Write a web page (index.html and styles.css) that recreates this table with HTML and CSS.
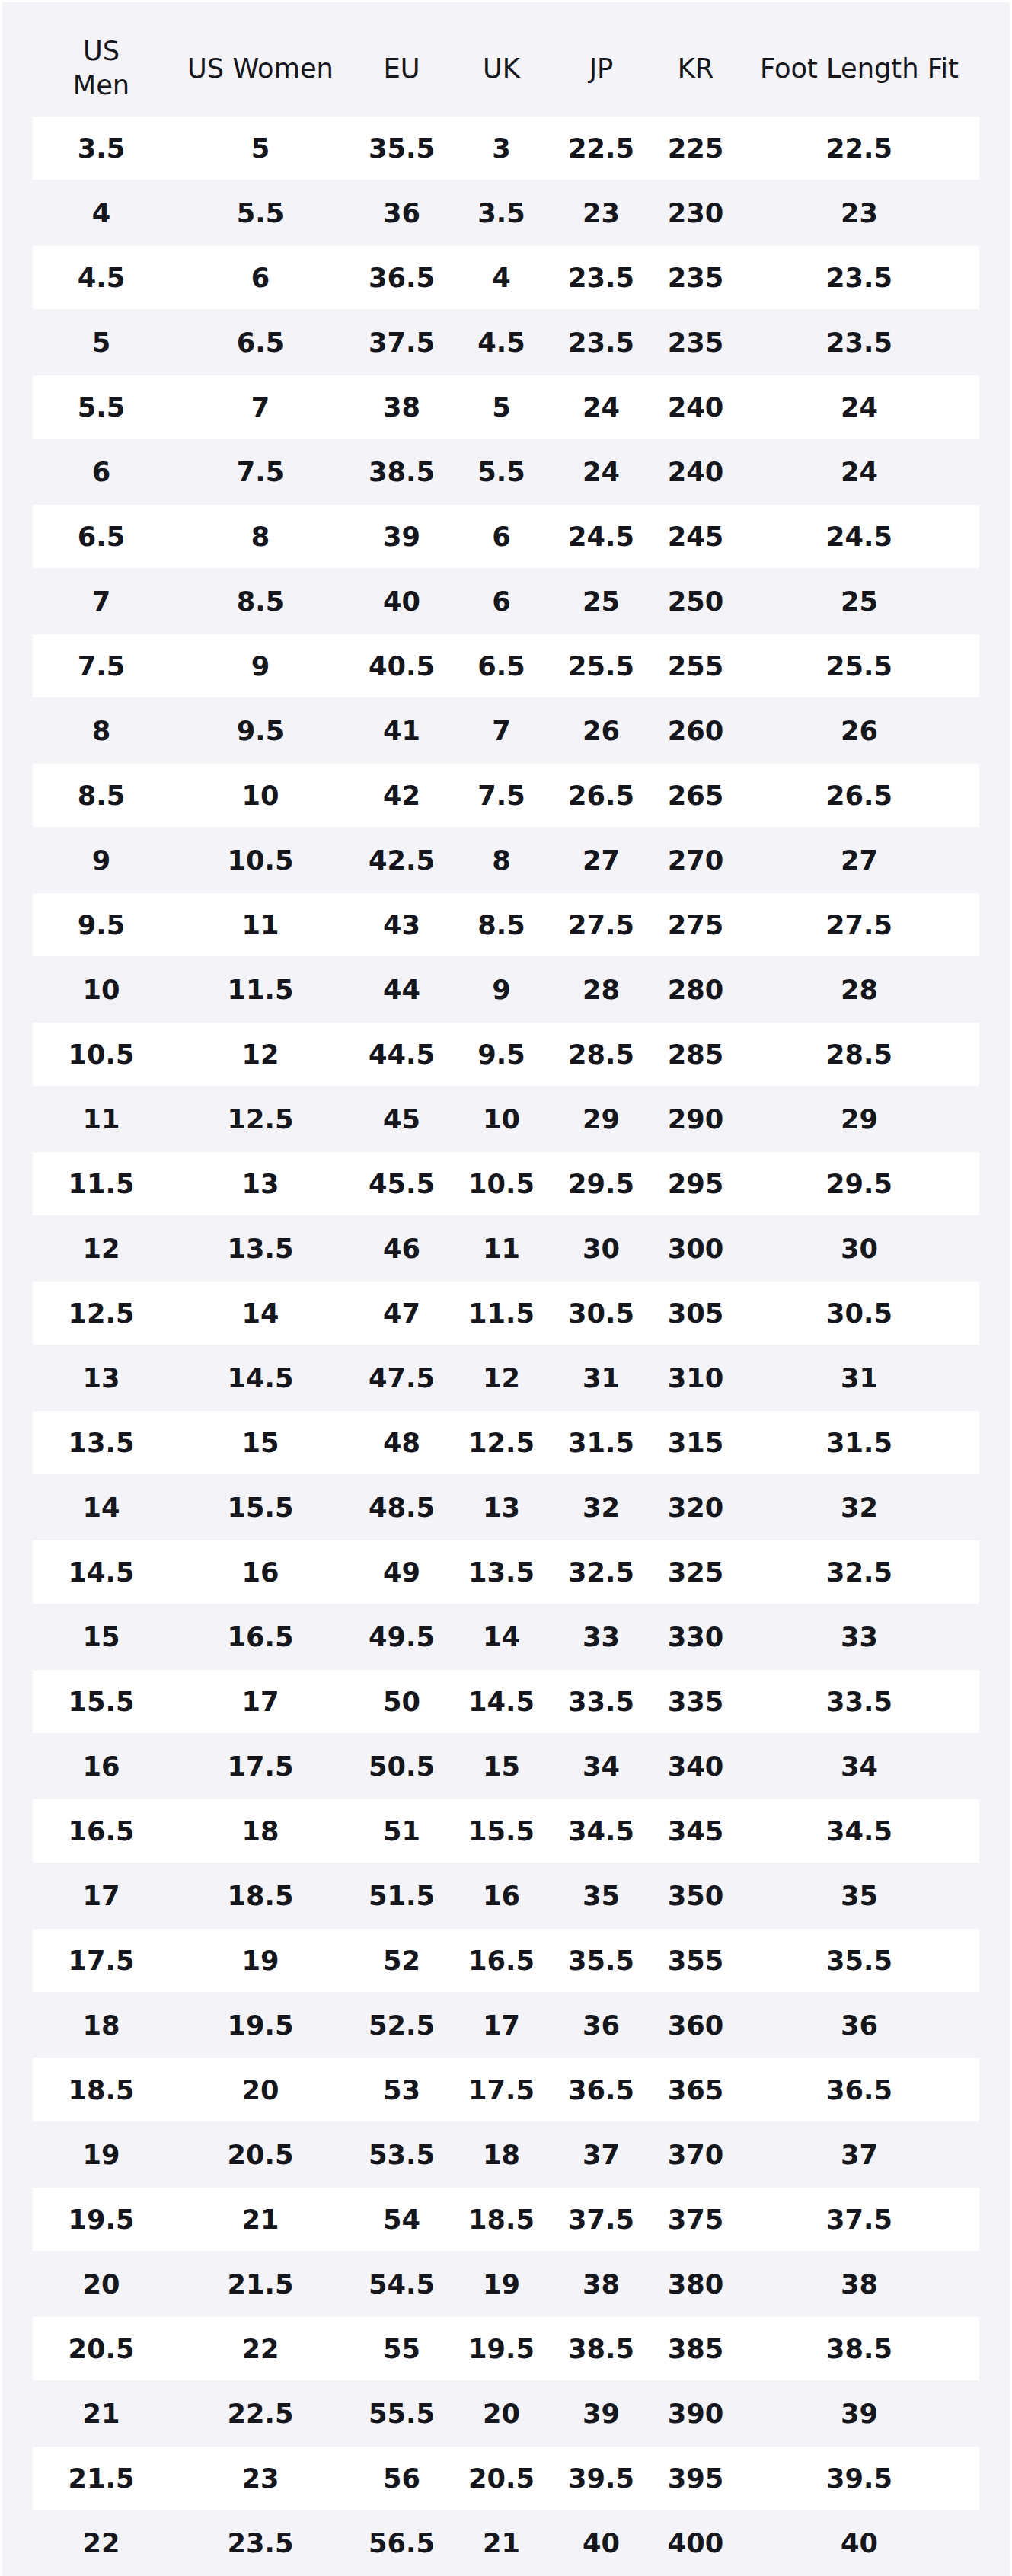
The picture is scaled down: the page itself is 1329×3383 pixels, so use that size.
FILE: index.html
```html
<!DOCTYPE html>
<html lang="en">
<head>
<meta charset="utf-8">
<title>Size Chart</title>
<link rel="stylesheet" href="styles.css">
</head>
<body>
<div class="chart">
<table class="size-table">
<colgroup>
<col class="c-men"><col class="c-women"><col class="c-eu"><col class="c-uk"><col class="c-jp"><col class="c-kr"><col class="c-foot">
</colgroup>
<thead>
<tr><th>US<br>Men</th><th>US Women</th><th>EU</th><th>UK</th><th>JP</th><th>KR</th><th>Foot Length Fit</th></tr>
</thead>
<tbody>
<tr><td>3.5</td><td>5</td><td>35.5</td><td>3</td><td>22.5</td><td>225</td><td>22.5</td></tr>
<tr><td>4</td><td>5.5</td><td>36</td><td>3.5</td><td>23</td><td>230</td><td>23</td></tr>
<tr><td>4.5</td><td>6</td><td>36.5</td><td>4</td><td>23.5</td><td>235</td><td>23.5</td></tr>
<tr><td>5</td><td>6.5</td><td>37.5</td><td>4.5</td><td>23.5</td><td>235</td><td>23.5</td></tr>
<tr><td>5.5</td><td>7</td><td>38</td><td>5</td><td>24</td><td>240</td><td>24</td></tr>
<tr><td>6</td><td>7.5</td><td>38.5</td><td>5.5</td><td>24</td><td>240</td><td>24</td></tr>
<tr><td>6.5</td><td>8</td><td>39</td><td>6</td><td>24.5</td><td>245</td><td>24.5</td></tr>
<tr><td>7</td><td>8.5</td><td>40</td><td>6</td><td>25</td><td>250</td><td>25</td></tr>
<tr><td>7.5</td><td>9</td><td>40.5</td><td>6.5</td><td>25.5</td><td>255</td><td>25.5</td></tr>
<tr><td>8</td><td>9.5</td><td>41</td><td>7</td><td>26</td><td>260</td><td>26</td></tr>
<tr><td>8.5</td><td>10</td><td>42</td><td>7.5</td><td>26.5</td><td>265</td><td>26.5</td></tr>
<tr><td>9</td><td>10.5</td><td>42.5</td><td>8</td><td>27</td><td>270</td><td>27</td></tr>
<tr><td>9.5</td><td>11</td><td>43</td><td>8.5</td><td>27.5</td><td>275</td><td>27.5</td></tr>
<tr><td>10</td><td>11.5</td><td>44</td><td>9</td><td>28</td><td>280</td><td>28</td></tr>
<tr><td>10.5</td><td>12</td><td>44.5</td><td>9.5</td><td>28.5</td><td>285</td><td>28.5</td></tr>
<tr><td>11</td><td>12.5</td><td>45</td><td>10</td><td>29</td><td>290</td><td>29</td></tr>
<tr><td>11.5</td><td>13</td><td>45.5</td><td>10.5</td><td>29.5</td><td>295</td><td>29.5</td></tr>
<tr><td>12</td><td>13.5</td><td>46</td><td>11</td><td>30</td><td>300</td><td>30</td></tr>
<tr><td>12.5</td><td>14</td><td>47</td><td>11.5</td><td>30.5</td><td>305</td><td>30.5</td></tr>
<tr><td>13</td><td>14.5</td><td>47.5</td><td>12</td><td>31</td><td>310</td><td>31</td></tr>
<tr><td>13.5</td><td>15</td><td>48</td><td>12.5</td><td>31.5</td><td>315</td><td>31.5</td></tr>
<tr><td>14</td><td>15.5</td><td>48.5</td><td>13</td><td>32</td><td>320</td><td>32</td></tr>
<tr><td>14.5</td><td>16</td><td>49</td><td>13.5</td><td>32.5</td><td>325</td><td>32.5</td></tr>
<tr><td>15</td><td>16.5</td><td>49.5</td><td>14</td><td>33</td><td>330</td><td>33</td></tr>
<tr><td>15.5</td><td>17</td><td>50</td><td>14.5</td><td>33.5</td><td>335</td><td>33.5</td></tr>
<tr><td>16</td><td>17.5</td><td>50.5</td><td>15</td><td>34</td><td>340</td><td>34</td></tr>
<tr><td>16.5</td><td>18</td><td>51</td><td>15.5</td><td>34.5</td><td>345</td><td>34.5</td></tr>
<tr><td>17</td><td>18.5</td><td>51.5</td><td>16</td><td>35</td><td>350</td><td>35</td></tr>
<tr><td>17.5</td><td>19</td><td>52</td><td>16.5</td><td>35.5</td><td>355</td><td>35.5</td></tr>
<tr><td>18</td><td>19.5</td><td>52.5</td><td>17</td><td>36</td><td>360</td><td>36</td></tr>
<tr><td>18.5</td><td>20</td><td>53</td><td>17.5</td><td>36.5</td><td>365</td><td>36.5</td></tr>
<tr><td>19</td><td>20.5</td><td>53.5</td><td>18</td><td>37</td><td>370</td><td>37</td></tr>
<tr><td>19.5</td><td>21</td><td>54</td><td>18.5</td><td>37.5</td><td>375</td><td>37.5</td></tr>
<tr><td>20</td><td>21.5</td><td>54.5</td><td>19</td><td>38</td><td>380</td><td>38</td></tr>
<tr><td>20.5</td><td>22</td><td>55</td><td>19.5</td><td>38.5</td><td>385</td><td>38.5</td></tr>
<tr><td>21</td><td>22.5</td><td>55.5</td><td>20</td><td>39</td><td>390</td><td>39</td></tr>
<tr><td>21.5</td><td>23</td><td>56</td><td>20.5</td><td>39.5</td><td>395</td><td>39.5</td></tr>
<tr><td>22</td><td>23.5</td><td>56.5</td><td>21</td><td>40</td><td>400</td><td>40</td></tr>
</tbody>
</table>
</div>
</body>
</html>
```
FILE: styles.css
```css
html, body {
  margin: 0;
  padding: 0;
  background: #ffffff;
}

body {
  font-family: "DejaVu Sans", "Liberation Sans", sans-serif;
  color: #16161d;
}

.chart {
  margin: 3px 3px 0 3px;
  padding: 22px 40px 0 40px;
  background: #f4f4f8;
}

.size-table {
  width: 100%;
  table-layout: fixed;
  border-collapse: separate;
  border-spacing: 0 2px;
}

.c-men { width: 180px; }
.c-women { width: 238px; }
.c-eu { width: 133px; }
.c-uk { width: 129px; }
.c-jp { width: 133px; }
.c-kr { width: 115px; }
.c-foot { width: 315px; }

.size-table th {
  height: 124px;
  box-sizing: border-box;
  padding: 17px 0;
  font-size: 35.2px;
  line-height: 45px;
  font-weight: normal;
  text-align: center;
  vertical-align: middle;
  color: #16161d;
}

.size-table td {
  height: 83px;
  box-sizing: border-box;
  padding: 19px 0;
  font-size: 35.2px;
  line-height: 45px;
  font-weight: bold;
  text-align: center;
  vertical-align: middle;
  color: #16161d;
}

.size-table tbody tr:nth-child(odd) td {
  background: #ffffff;
}
```
